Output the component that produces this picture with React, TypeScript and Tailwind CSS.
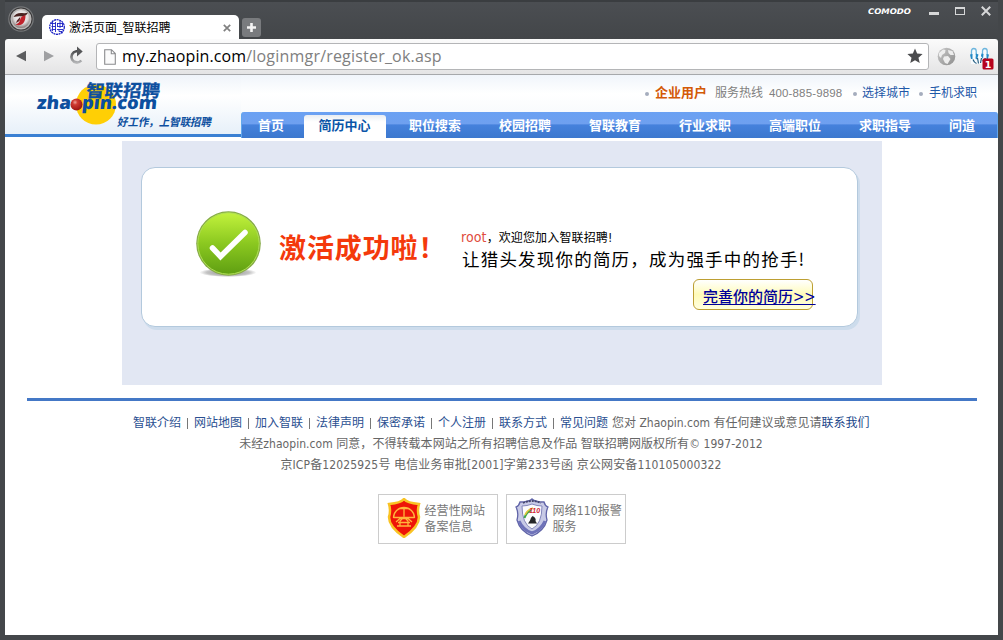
import React from 'react';

const SONG = "font-['DejaVu_Sans_Condensed','Noto_Sans_CJK_SC',sans-serif]";

const navItems = ['职位搜索', '校园招聘', '智联教育', '行业求职', '高端职位', '求职指导'];
const footerLinks = ['智联介绍', '网站地图', '加入智联', '法律声明', '保密承诺', '个人注册', '联系方式', '常见问题'];

function BrowserBadge() {
  return (
    <svg width="26" height="26" viewBox="0 0 26 26">
      <defs>
        <radialGradient id="bb" cx="50%" cy="40%" r="60%">
          <stop offset="0" stopColor="#ffffff" />
          <stop offset="0.6" stopColor="#dedada" />
          <stop offset="1" stopColor="#6e5f5d" />
        </radialGradient>
      </defs>
      <circle cx="13" cy="13" r="12.2" fill="#3a3839" stroke="#77797b" strokeWidth="1.2" />
      <circle cx="13" cy="13" r="9.8" fill="url(#bb)" stroke="#b9b7b6" strokeWidth="1.5" />
      <path d="M5.500 11Q8 6.500 14 7Q18 7.500 20 6.500Q18.500 10 14.500 10.500Q10 10 5.500 11Z" fill="#4a2422" />
      <path d="M16 9.500Q12.500 10.500 12 14Q11.500 17 7.500 18.500Q12 20.500 15 17.500Q17.500 15 17.500 9.500Z" fill="#c0222b" />
      <path d="M12.500 10.500L9 14.500L8 17L11.500 15Z" fill="#5b2527" />
    </svg>
  );
}

function TabFavicon() {
  return (
    <svg width="16" height="16" viewBox="0 0 16 16" fill="none" stroke="#1c22c4" strokeWidth=".9">
      <circle cx="8" cy="8" r="7.3" strokeDasharray="2 .6" strokeWidth="1.3" />
      <path d="M2 4.5h5M2.5 7.5h4M2.5 10.5h4.5M3.5 3v9M6.5 3v10M8 4.5h6M8.5 7.5h5.5M11 2v7M8.5 4v4M13.5 4v4M8 10.5h6M10 10.5v2h3v2" />
    </svg>
  );
}

function TitleBar() {
  return (
    <div className="flex h-[39px] shrink-0 border-t-2 border-[#3a3d40] bg-gradient-to-b from-[#4b4e52] to-[#434649] pl-[3px]">
      <div className="mt-[4px] w-[34px]"><BrowserBadge /></div>
      <div className="mt-[13px] flex h-[24px] w-[197px] items-center rounded-t-[5px] bg-white pl-[7px] pr-[8px]">
        <TabFavicon />
        <span className={`ml-[4px] mt-[2px] grow text-[12px] leading-[24px] text-black ${SONG}`}>激活页面_智联招聘</span>
        <svg className="mt-[2px]" width="8" height="8" viewBox="0 0 8 8"><path d="M.8.8l6.4 6.4M7.2.8L.8 7.2" stroke="#808080" strokeWidth="1.7" /></svg>
      </div>
      <div className="ml-[3px] mt-[16px] flex h-[19px] w-[19px] items-center justify-center rounded-[3px] bg-[#797b7e]">
        <svg width="9" height="9" viewBox="0 0 9 9"><path d="M4.5 0v9M0 4.5h9" stroke="#f4f4f4" strokeWidth="2.6" /></svg>
      </div>
      <div className="grow" />
      <div className="-mt-px flex h-[20px] items-center pr-[7px]">
        <svg width="44" height="10" viewBox="0 0 44 10">
          <text x="0" y="8" fill="#fff" fontFamily="DejaVu Sans" fontSize="7.700" fontWeight="700" fontStyle="italic" textLength="43" lengthAdjust="spacingAndGlyphs">COMODO</text>
        </svg>
        <div className="ml-[17px] mt-[4px] h-[3px] w-[10px] bg-[#d6d7d8]" />
        <div className="ml-[16px] h-[8px] w-[10px] border border-t-[2px] border-[#d6d7d8]" />
        <svg className="ml-[16px]" width="10" height="10" viewBox="0 0 10 10"><path d="M.8.8l8.4 8.4M9.2.8L.8 9.2" stroke="#d6d7d8" strokeWidth="2" /></svg>
      </div>
    </div>
  );
}

function Toolbar() {
  return (
    <div className="flex h-[36px] shrink-0 items-center rounded-t-[3px] border-b border-[#a6a8ab] bg-gradient-to-b from-[#fbfbfb] to-[#e4e4e5] pl-[11px]">
      <svg className="-mt-px" width="10" height="12" viewBox="0 0 10 12"><path d="M0 6L10 .8v10.4Z" fill="#5c5d5f" /></svg>
      <svg className="-mt-px ml-[18px]" width="10" height="12" viewBox="0 0 10 12"><path d="M10 6L0 .8v10.4Z" fill="#9fa0a2" /></svg>
      <svg className="-mt-[2px] ml-[14px]" width="17" height="19" viewBox="0 0 17 19">
        <defs><linearGradient id="rl" x1="0" y1="0" x2="0" y2="1"><stop offset="0" stopColor="#4c4d4f" /><stop offset="1" stopColor="#b2b3b5" /></linearGradient></defs>
        <path d="M10 5.3H8.300A5.600 5.600 0 1 0 13.300 14.500" fill="none" stroke="url(#rl)" strokeWidth="2.6" />
        <path d="M9 .5L14.7 5.6L9 10.5Z" fill="#555658" />
      </svg>
      <div className="ml-[11px] flex h-[27px] w-[833px] items-center rounded-[3px] border border-[#b4b5b7] bg-white pl-[7px] pr-[5px]">
        <svg width="12" height="16" viewBox="0 0 12 16"><path d="M.7.7h6.8l3.8 3.8v10.8H.7ZM7.3.7v4h4" fill="#fbfbfb" stroke="#8b8c8e" strokeWidth="1.1" /></svg>
        <span className="-mt-[2px] ml-[6px] grow whitespace-nowrap font-['Open_Sans','Noto_Sans',sans-serif] text-[16px] leading-[24px] text-[#808080]">
          <span className="tracking-[0.1px] text-black">my.zhaopin.com</span><span className="tracking-[0.2px]">/loginmgr/register_ok.asp</span>
        </span>
        <svg className="-mt-px" width="16" height="16" viewBox="0 0 24 24"><path d="M12 .8l3.2 7.600 8.2.7-6.2 5.400 1.9 8L12 18.200l-7.100 4.300 1.900-8L.6 9.100l8.200-.7Z" fill="#4b4c4e" /></svg>
      </div>
      <svg className="ml-[8px] shrink-0" width="19" height="19" viewBox="0 0 19 19">
        <defs><linearGradient id="gg" x1="0" y1="0" x2="1" y2="1"><stop offset="0" stopColor="#c9c9c9" /><stop offset="1" stopColor="#8d8d8d" /></linearGradient></defs>
        <circle cx="9.500" cy="9.500" r="8.800" fill="url(#gg)" />
        <path d="M2 6L6 2.500L8.500 3L8 6L5 8L4 11L2 9ZM11 3L15.500 4L17 8L13.500 8L11.500 6ZM7 9.500L11 9L13.500 12L10.500 17L8 16L6 12Z" fill="#ededed" />
      </svg>
      <svg className="ml-[13px] mt-[3px] shrink-0" width="26" height="24" viewBox="0 0 26 24">
        <path d="M2 4h18v14H2Z" fill="#f7fbfd" />
        <path d="M2.500 9V5Q2.500 2.500 4.800 2.500T7.200 5V9M13.500 9V5Q13.500 2.500 15.800 2.500T18.200 5V9" fill="none" stroke="#6db6de" strokeWidth="1.300" />
        <path d="M1 8.500l2.500-.5v5H2ZM7 7.500l2.500 1-1.500 5-1.500-1ZM12.500 7.500l2 .5-.5 5-2-3ZM17.500 8l2.500.5-1 4.500h-1.500Z" fill="#2389c6" />
        <path d="M4 13.500q1 3 3.500 4M8.500 12l1 5.500M12.500 12l-1 5M16.500 12q-1 2-3 3" fill="none" stroke="#245c80" strokeWidth="1.200" />
        <rect x="13.500" y="12.500" width="11" height="11" rx="1.500" fill="#b5031d" />
        <text x="19" y="21.600" textAnchor="middle" fill="#fff" fontFamily="DejaVu Sans" fontWeight="700" fontSize="9.500">1</text>
      </svg>
    </div>
  );
}

function Logo() {
  return (
    <svg className="shrink-0" width="236" height="59" viewBox="5 75 236 59">
      <defs>
        <radialGradient id="ball" cx="38%" cy="32%" r="70%"><stop offset="0" stopColor="#f0a39a" /><stop offset=".3" stopColor="#cf3a32" /><stop offset="1" stopColor="#9a1311" /></radialGradient>
      </defs>
      <circle cx="96" cy="104.500" r="20" fill="#ffcf05" />
      <g fill="#0d4f9f">
        <text transform="translate(85.500 96.800) skewX(-6)" fontFamily="Noto Sans CJK SC" fontWeight="700" fontSize="17.500" stroke="#0d4f9f" strokeWidth=".3" textLength="74" lengthAdjust="spacingAndGlyphs">智联招聘</text>
        <text transform="translate(36.500 109.300) skewX(-6)" fontFamily="Open Sans" fontWeight="800" fontSize="18" textLength="34" lengthAdjust="spacingAndGlyphs">zha</text>
        <text transform="translate(81.500 109.300) skewX(-6)" fontFamily="Open Sans" fontWeight="800" fontSize="18" textLength="75" lengthAdjust="spacingAndGlyphs">pin.com</text>
        <text transform="translate(117 125.500) skewX(-12)" fontFamily="Noto Sans CJK SC" fontWeight="700" fontSize="11" textLength="94" lengthAdjust="spacingAndGlyphs">好工作，上智联招聘</text>
      </g>
      <circle cx="76.500" cy="104.500" r="6" fill="url(#ball)" />
    </svg>
  );
}

function Dot() {
  return <span className="mt-[2px] h-[4px] w-[4px] shrink-0 rounded-full bg-[#a5adbd]" />;
}

function SiteHeader() {
  return (
    <header className="flex h-[63px] shrink-0">
      <div className="flex h-[62px] w-[236px] shrink-0 flex-col border-b-[3px] border-[#3a80d3] bg-gradient-to-b from-[#eff4fa] via-[#ffffff] via-35% to-[#e7f0f9]">
        <Logo />
      </div>
      <div className="flex w-[757px] flex-col bg-gradient-to-b from-[#f0f5fb] via-[#ffffff] via-30% to-[#f0f5fa]">
        <div className={`-mt-px flex h-[38px] shrink-0 items-center justify-end whitespace-nowrap pr-[21px] text-[12px] leading-[36px] text-[#1e58a8] ${SONG}`}>
          <Dot />
          <span className="ml-[6px] w-[60px] text-[13px] font-bold text-[#d35a08]">企业用户</span>
          <span className="w-[54px] text-[#808080]">服务热线</span>
          <span className="w-[84px] font-['Liberation_Sans',sans-serif] text-[11.500px] tracking-[0.140px] text-[#808080]">400-885-9898</span>
          <Dot />
          <span className="ml-[5px] w-[57px]">选择城市</span>
          <Dot />
          <span className="ml-[6px]">手机求职</span>
        </div>
        <nav className={`flex h-[26px] rounded-t-[3px] border-x border-[#62a7ec] bg-[linear-gradient(#6aa1f3_0%,#6fa0ef_45%,#4581dc_50%,#3c78ce_100%)] text-[13px] font-bold leading-[27px] text-white ${SONG}`}>
          <span className="w-[62px] pl-[16px]">首页</span>
          <span className="mt-[3px] h-[23px] w-[82px] rounded-t-[3px] bg-gradient-to-b from-[#e9edf2] via-white via-30% to-white pr-px text-center leading-[21px] text-[#0b55a8]">简历中心</span>
          <span className="w-[4px]" />
          {navItems.map((item) => (
            <span key={item} className="w-[90px] text-center">{item}</span>
          ))}
          <span className="w-[60px] pl-[19px]">问道</span>
        </nav>
      </div>
    </header>
  );
}

function SuccessIcon() {
  return (
    <svg className="mt-[40px] shrink-0" width="68" height="70" viewBox="0 0 68 70">
      <defs>
        <linearGradient id="ok" x1="0" y1="0" x2="0" y2="1"><stop offset="0" stopColor="#c2f23c" /><stop offset=".5" stopColor="#8bc820" /><stop offset="1" stopColor="#5f9f12" /></linearGradient>
        <radialGradient id="sh"><stop offset="0" stopColor="#888" /><stop offset=".75" stopColor="#c4c4c4" /><stop offset="1" stopColor="#fff" /></radialGradient>
      </defs>
      <ellipse cx="34" cy="64.500" rx="28.500" ry="4.500" fill="url(#sh)" />
      <circle cx="34.500" cy="35.500" r="32.300" fill="#85aa45" />
      <circle cx="34.500" cy="35.500" r="30.700" fill="url(#ok)" stroke="#b0df55" strokeWidth="1" />
      <path d="M18.500 40l8 8.500L51 24.500" fill="none" stroke="#fff" strokeWidth="5.500" strokeLinecap="round" />
    </svg>
  );
}

function ResultPanel() {
  return (
    <main className="ml-[117px] mt-[3px] h-[244px] w-[760px] shrink-0 bg-[#e2e7f3] pl-[19px] pt-[26px]">
      <section className="flex h-[160px] w-[717px] whitespace-nowrap rounded-[14px] border border-[#b3c9dd] bg-white pl-[52px] shadow-[2px_3px_0_#cddcec]">
        <SuccessIcon />
        <h1 className="ml-[17px] mt-[60px] w-[182px] shrink-0 font-['Noto_Sans_CJK_SC',sans-serif] text-[27px] font-bold leading-[38px] tracking-[0.9px] text-[#f4390b]">激活成功啦！</h1>
        <div className="flex shrink-0 flex-col">
          <p className={`mt-[60px] text-[12px] leading-[18px] text-black ${SONG}`}>
            <span className="text-[14px] tracking-[0.1px] text-[#df4d3e]">root</span>，<span className="tracking-[0.150px]">欢迎您加入智联招聘!</span>
          </p>
          <p className="ml-px font-['Noto_Sans_CJK_SC',sans-serif] text-[17.500px] leading-[24px] tracking-[1.200px] text-black">让猎头发现你的简历，成为强手中的抢手!</p>
          <a className={`ml-[232px] mt-[8px] h-[31px] w-[120px] rounded-[6px] border border-[#bd9f33] bg-gradient-to-b from-white via-[#fffbb8] to-[#ffffdf] pl-[9px] text-[15px] font-medium leading-[35px] text-[#00009a] underline decoration-1 underline-offset-[2px] ${SONG}`}>
            完善你的简历&gt;&gt;
          </a>
        </div>
      </section>
    </main>
  );
}

function RedShield() {
  return (
    <svg width="34" height="40" viewBox="0 0 34 40">
      <path d="M17 1Q20 5 32 6Q30 13 32 19Q32 29 17 39Q2 29 2 19Q4 13 2 6Q14 5 17 1Z" fill="#ee1408" stroke="#f9c324" strokeWidth="2.500" />
      <g fill="none" stroke="#ffb63c" strokeWidth="1.300">
        <path d="M6.500 20a10.500 10.500 0 0 1 21 0M12 10.500h10M17 10.500v8M6.500 19.500h21M9 24l4-3.500h8l4 3.500M11 24.500h12M10 28h14M17 19l-4 4v5M17 19l4 4v5" />
      </g>
    </svg>
  );
}

function PoliceShield() {
  return (
    <svg width="34" height="40" viewBox="0 0 34 40">
      <path d="M17 1Q20 4 29 4Q30 8 33 9Q30 15 32 22Q29 33 17 38Q5 33 2 22Q4 15 1 9Q4 8 5 4Q14 4 17 1Z" fill="#c8cae6" stroke="#6064a8" strokeWidth="1.300" />
      <path d="M8 5Q17 1 26 5" stroke="#45466c" strokeWidth="1.800" strokeDasharray="2 1" fill="none" />
      <path d="M4 23Q8 32 17 35Q26 32 30 23" stroke="#6e72b9" strokeWidth="3" fill="none" />
      <path d="M17 6Q22 8 27 8Q27 26 17 31Q7 26 7 8Q12 8 17 6Z" fill="#fbfbfd" stroke="#8286bb" />
      <path d="M9.500 20Q11.500 14 16 12" fill="none" stroke="#42a64b" strokeWidth="2" />
      <path d="M10 17Q12 12 18 10" fill="none" stroke="#e3c83d" strokeWidth="1.500" />
      <text x="14" y="15" fontFamily="Liberation Sans" fontSize="7" fontWeight="700" fontStyle="italic" fill="#d32532">110</text>
      <path d="M17.500 18q4 2 3 5l1.500 2.500h-9l2-3q0-2 2.500-4.500Z" fill="#252629" />
    </svg>
  );
}

function Certificate({ icon, lines }: { icon: React.ReactNode; lines: string[] }) {
  return (
    <div className="flex h-[50px] w-[120px] items-center border border-[#ccc] pl-[8px]">
      <div className="-mt-[3px] w-[38px] shrink-0">{icon}</div>
      <div className="whitespace-nowrap text-[12px] leading-[16px] tracking-[0.120px] text-[#777]">
        {lines.map((line) => <div key={line}>{line}</div>)}
      </div>
    </div>
  );
}

function SiteFooter() {
  return (
    <footer className={`mt-[13px] flex flex-col items-center pr-px text-[12px] leading-[21px] text-[#666] ${SONG}`}>
      <div className="ml-[22px] h-[3px] w-[950px] self-start bg-[#4478c6]" />
      <div className="mt-[12px] flex w-[736px] whitespace-nowrap">
        {footerLinks.map((link, i) => (
          <span key={link} className="flex w-[61px] shrink-0 items-center text-[#2a4f91]">
            {link}
            {i < footerLinks.length - 1 && <span className="ml-[6px] h-[11px] w-px bg-[#777]" />}
          </span>
        ))}
        <span className="-ml-[9px]">您对 Zhaopin.com 有任何建议或意见请<a className="text-[#174489]">联系我们</a></span>
      </div>
      <p className="whitespace-nowrap tracking-[0.050px]">未经zhaopin.com 同意，不得转载本网站之所有招聘信息及作品 智联招聘网版权所有© 1997-2012</p>
      <p className="whitespace-nowrap tracking-[0.140px]">京ICP备12025925号 电信业务审批[2001]字第233号函 京公网安备110105000322</p>
      <div className="-mr-px mt-[18px] flex gap-[8px]">
        <Certificate icon={<RedShield />} lines={['经营性网站', '备案信息']} />
        <Certificate icon={<PoliceShield />} lines={['网络110报警', '服务']} />
      </div>
    </footer>
  );
}

export default function App() {
  return (
    <div className="flex h-[640px] w-[1003px] flex-col overflow-hidden border-b-[5px] border-l-[5px] border-r-[5px] border-[#44474a] bg-[#46494d]">
      <TitleBar />
      <Toolbar />
      <div className="flex grow flex-col bg-white">
        <SiteHeader />
        <ResultPanel />
        <SiteFooter />
      </div>
    </div>
  );
}
